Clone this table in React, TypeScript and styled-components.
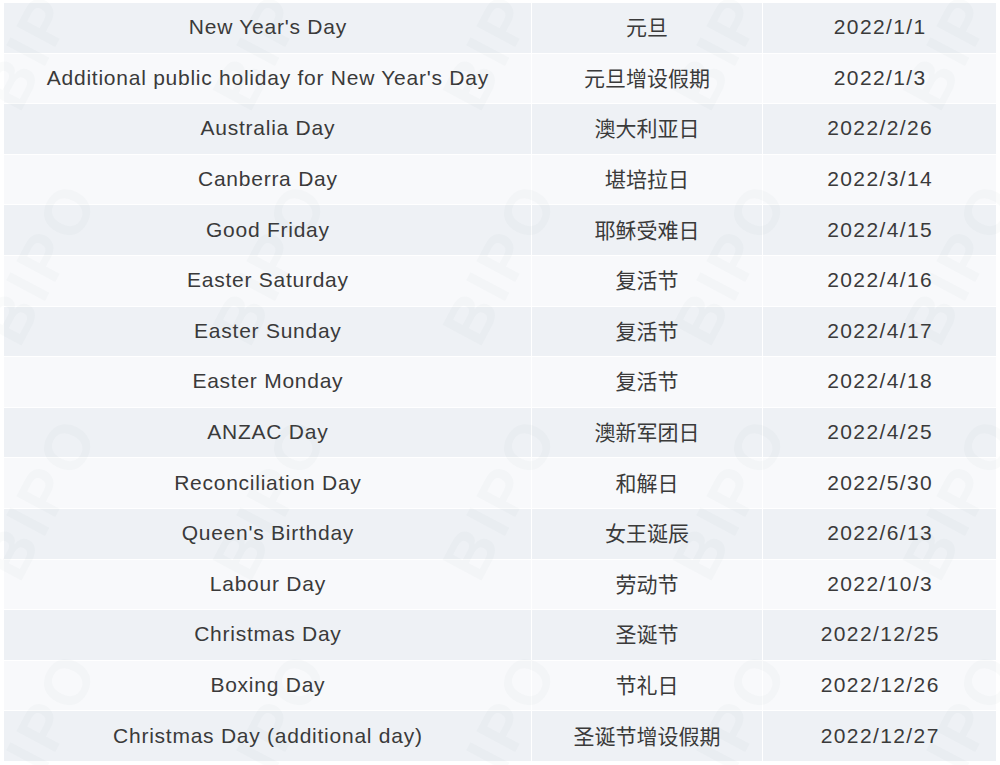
import styled, { createGlobalStyle } from 'styled-components'

const GlobalStyle = createGlobalStyle`
    html, body {
        margin: 0;
        padding: 0;
        background: #fff;
    }
    body {
        font-family: "Liberation Sans", "Noto Sans CJK SC", sans-serif;
        color: #333;
    }
`

const holidays = [
    { en: "New Year's Day", zh: '元旦', date: '2022/1/1' },
    { en: "Additional public holiday for New Year's Day", zh: '元旦增设假期', date: '2022/1/3' },
    { en: 'Australia Day', zh: '澳大利亚日', date: '2022/2/26' },
    { en: 'Canberra Day', zh: '堪培拉日', date: '2022/3/14' },
    { en: 'Good Friday', zh: '耶稣受难日', date: '2022/4/15' },
    { en: 'Easter Saturday', zh: '复活节', date: '2022/4/16' },
    { en: 'Easter Sunday', zh: '复活节', date: '2022/4/17' },
    { en: 'Easter Monday', zh: '复活节', date: '2022/4/18' },
    { en: 'ANZAC Day', zh: '澳新军团日', date: '2022/4/25' },
    { en: 'Reconciliation Day', zh: '和解日', date: '2022/5/30' },
    { en: "Queen's Birthday", zh: '女王诞辰', date: '2022/6/13' },
    { en: 'Labour Day', zh: '劳动节', date: '2022/10/3' },
    { en: 'Christmas Day', zh: '圣诞节', date: '2022/12/25' },
    { en: 'Boxing Day', zh: '节礼日', date: '2022/12/26' },
    { en: 'Christmas Day (additional day)', zh: '圣诞节增设假期', date: '2022/12/27' },
]

const Page = styled.div`
    position: relative;
    width: 1000px;
    height: 765px;
    overflow: hidden;
    background: #fff;
`

const Table = styled.div`
    display: flex;
    flex-direction: column;
    gap: 1px;
    padding: 3px 4px 0 4px;
`

const Row = styled.div<{ $shade: boolean }>`
    display: grid;
    grid-template-columns: 527px 230px 1fr;
    gap: 1px;
    height: 49.6px;
    background: #fff;

    & > div {
        background: ${p => (p.$shade ? '#eef1f5' : '#f8f9fb')};
    }
`

type Kind = 'en' | 'zh' | 'date'

const Cell = styled.div<{ $kind: Kind }>`
    display: flex;
    align-items: center;
    justify-content: center;
    padding-bottom: ${p => (p.$kind === 'zh' ? '3px' : '1px')};
    font-size: 21px;
    font-family: ${p => (p.$kind === 'zh' ? '"Noto Sans CJK SC", sans-serif' : '"Liberation Sans", "Noto Sans CJK SC", sans-serif')};
    letter-spacing: ${p => (p.$kind === 'en' ? '0.75px' : p.$kind === 'date' ? '1.4px' : '0')};
    text-indent: ${p => (p.$kind === 'en' ? '0.75px' : p.$kind === 'date' ? '1.4px' : '0')};
    color: #3a3a3a;
    white-space: nowrap;
`

const Watermarks = styled.div`
    position: absolute;
    inset: 0;
    pointer-events: none;
    display: grid;
    grid-template-columns: repeat(5, 230px);
    grid-template-rows: repeat(4, 235px);
    margin: -90px 0 0 -75px;
`

const Mark = styled.span`
    display: flex;
    align-items: center;
    justify-content: center;
    font-family: "Liberation Sans", sans-serif;
    font-weight: 700;
    font-size: 64px;
    letter-spacing: 4px;
    color: rgba(120, 130, 150, 0.035);
    transform: rotate(-62deg);
`

const App = () => {
    return (
        <Page>
            <GlobalStyle />
            <Table>
                {holidays.map((h, i) => (
                    <Row key={i} $shade={i % 2 === 0}>
                        <Cell $kind="en">{h.en}</Cell>
                        <Cell $kind="zh">{h.zh}</Cell>
                        <Cell $kind="date">{h.date}</Cell>
                    </Row>
                ))}
            </Table>
            <Watermarks>
                {Array.from({ length: 20 }).map((_, i) => (
                    <Mark key={i}>BIPO</Mark>
                ))}
            </Watermarks>
        </Page>
    )
}

export default App
